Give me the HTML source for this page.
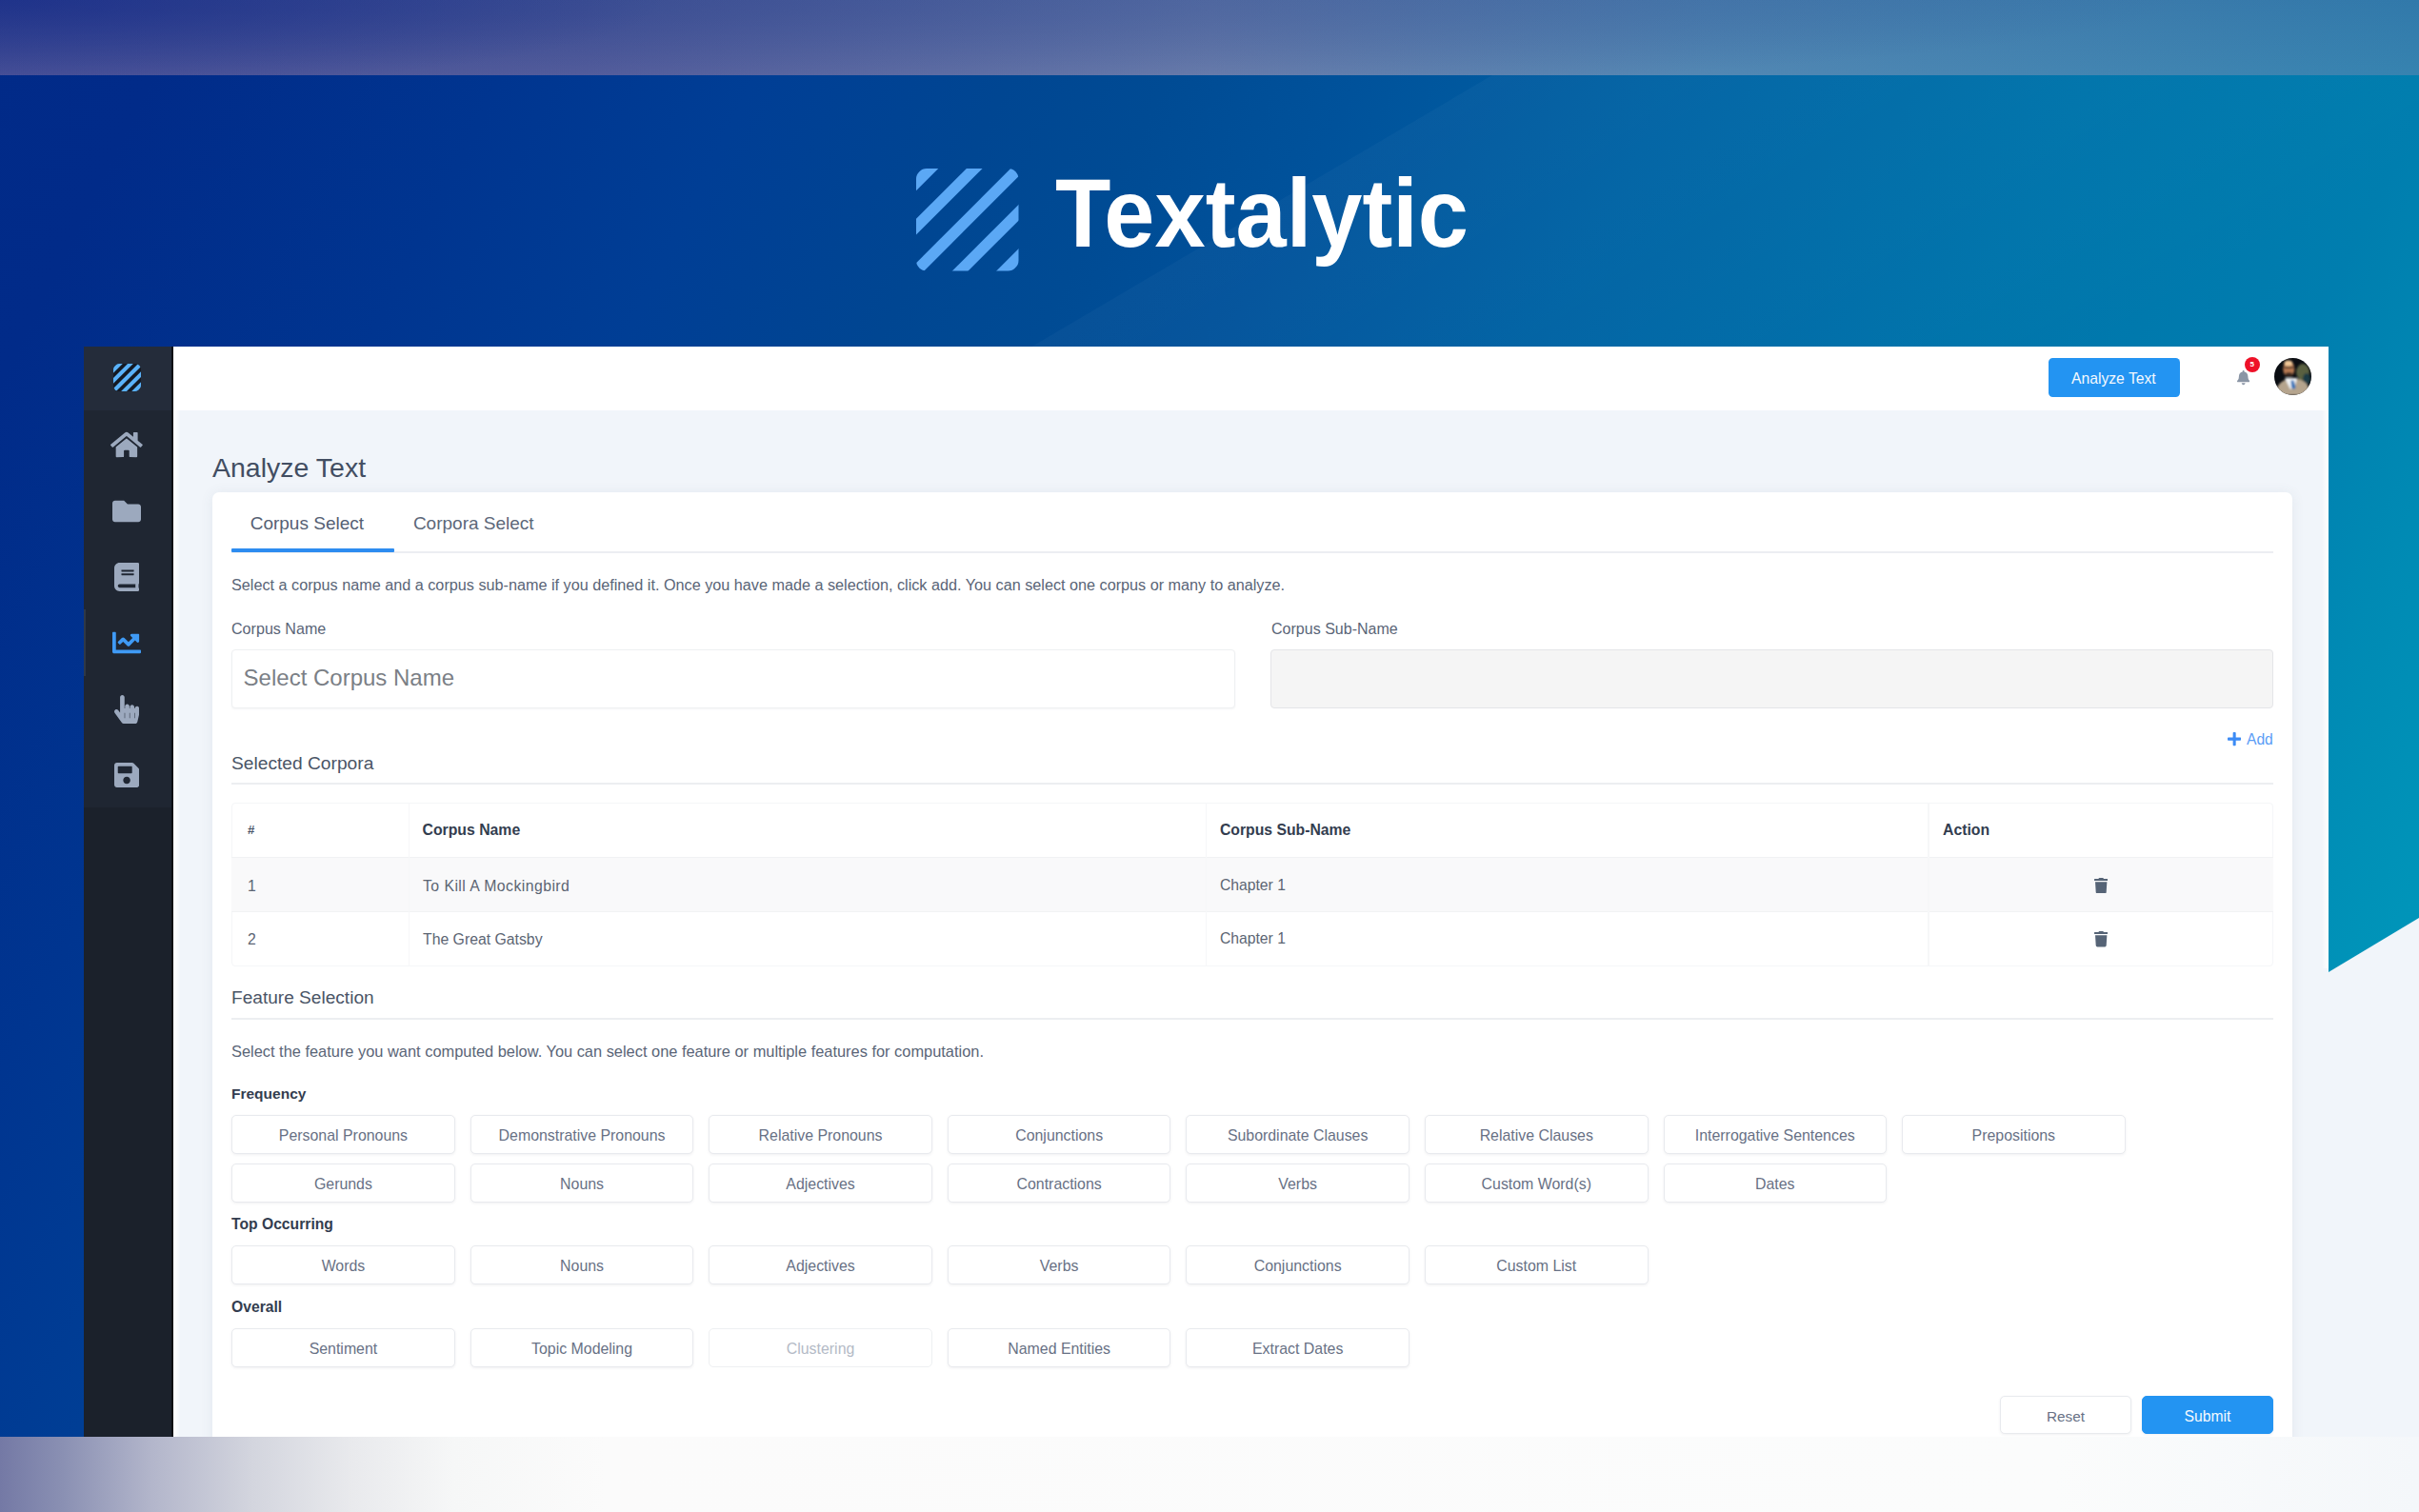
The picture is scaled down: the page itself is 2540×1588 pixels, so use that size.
<!DOCTYPE html>
<html>
<head>
<meta charset="utf-8">
<title>Textalytic</title>
<style>
*{box-sizing:border-box;margin:0;padding:0}
html,body{width:2540px;height:1588px;overflow:hidden;background:#fff}
body{font-family:"Liberation Sans",sans-serif;position:relative;color:#4a5568}
.abs{position:absolute}
#bg{left:0;top:0;width:2540px;height:1588px;background:linear-gradient(116.6deg,#012a88 0%,#012b89 6%,#003590 17%,#003e95 25%,#004692 33%,#004b94 38%,#00529b 44%,#0063a4 54%,#0074ab 67%,#007eaf 78%,#008ab4 84%,#0094b9 90%,#009cbd 100%)}
#tri{left:0;top:0;width:2540px;height:1588px}
#topband{left:0;top:0;width:2540px;height:79px;background:radial-gradient(ellipse 700px 95px at 0 0,rgba(20,40,135,.6),rgba(20,40,135,0)),radial-gradient(ellipse 2300px 120px at 0 0,rgba(20,50,132,.5),rgba(20,50,132,0)),linear-gradient(180deg,rgba(20,60,135,.14) 0%,rgba(20,60,135,0) 100%),linear-gradient(90deg,#56599c 0%,#5d639f 24%,#6d80ad 50%,#5287b3 71%,#3683b0 100%)}
#botband{left:0;top:1508.5px;width:2540px;height:80px;background:linear-gradient(90deg,#7479a5 0%,#8a90b3 2.6%,#b3b6cb 6.3%,#d3d5de 10.4%,#e9eaed 14.6%,#f6f7f7 18.7%,#fbfbfb 25%,#fbfcfc 85%,#f4f7fa 100%)}
#app{left:88px;top:364px;width:2357px;height:1145px;background:#f1f5fa;overflow:hidden}
#in{left:-88px;top:-364px;width:2540px;height:1588px}
.t{position:absolute;white-space:nowrap}
.hr{position:absolute;height:2px;background:#eceef1}
.lbl{color:#5a6577}
.h3{color:#4a5466}
.p{color:#5a6577}
.b{font-weight:700;color:#333d4f}
.td{color:#5c6573}
.fb{position:absolute;width:234.5px;height:41px;border:1px solid #e8eaee;border-radius:5px;background:#fff;box-shadow:0 1px 3px rgba(50,60,80,.075);font-size:15.9px;line-height:42px;text-align:center;color:#687185;white-space:nowrap}
.fb.dis{color:#b4bac6;border-color:#eef0f2;box-shadow:none}
</style>
</head>
<body>
<div id="bg" class="abs"></div>
<svg id="tri" class="abs" viewBox="0 0 2540 1588"><defs><linearGradient id="stk" gradientUnits="userSpaceOnUse" x1="1325" y1="221" x2="1630" y2="738"><stop offset="0" stop-color="#fff" stop-opacity=".028"/><stop offset="1" stop-color="#fff" stop-opacity="0"/></linearGradient></defs><polygon points="1701,0 2540,0 2540,364 1083.6,364" fill="url(#stk)"/><polygon points="2540,964 2540,1588 1500,1588" fill="#f1f5fa"/></svg>
<div id="topband" class="abs"></div>
<div id="botband" class="abs"></div>

<svg class="abs" style="left:962px;top:177px" width="107.5" height="107.5" viewBox="0 0 107.5 107.5"><defs><clipPath id="rc962"><rect x="0" y="0" width="107.5" height="107.5" rx="11" ry="11"/></clipPath></defs><g clip-path="url(#rc962)" stroke="#5ba8f5" stroke-width="11.8" fill="none"><line x1="44.9" y1="-30" x2="-30" y2="44.9"/><line x1="91.2" y1="-30" x2="-30" y2="91.2"/><line x1="137.5" y1="-30" x2="-30" y2="137.5"/><line x1="183.8" y1="-30" x2="-30" y2="183.8"/><line x1="230.1" y1="-30" x2="-30" y2="230.1"/></g></svg>
<div class="t " style="left:1108px;top:166.41px;font-size:102.7px;line-height:116px;font-weight:700;color:#fff;transform-origin:0 50%;transform:scaleX(.931)">Textalytic</div>
<div id="app" class="abs"><div id="in" class="abs">
<div class="abs" style="left:88px;top:364px;width:94px;height:1145px;background:#1b212b"></div>
<div class="abs" style="left:88px;top:431px;width:94px;height:417px;background:#1f2632"></div>
<div class="abs" style="left:88px;top:364px;width:94px;height:67px;background:#242c3a"></div>
<div class="abs" style="left:180px;top:364px;width:2px;height:1145px;background:#0b0e14"></div>
<div class="abs" style="left:88px;top:640px;width:2px;height:70px;background:#2f3846"></div>
<svg class="abs" style="left:119.3px;top:382.4px" width="29" height="29" viewBox="0 0 107.5 107.5"><defs><clipPath id="rc119"><rect x="0" y="0" width="107.5" height="107.5" rx="22" ry="22"/></clipPath></defs><g clip-path="url(#rc119)" stroke="#5ab2fa" stroke-width="15.2" fill="none"><rect x="-2" y="-2" width="111.5" height="111.5" fill="#141923" stroke="none"/><line x1="55.7" y1="-30" x2="-30" y2="55.7"/><line x1="96.6" y1="-30" x2="-30" y2="96.6"/><line x1="137.5" y1="-30" x2="-30" y2="137.5"/><line x1="178.4" y1="-30" x2="-30" y2="178.4"/><line x1="219.3" y1="-30" x2="-30" y2="219.3"/></g></svg>
<svg class="abs" style="left:116.1px;top:452.0px" width="33.8" height="30.0" viewBox="0 0 576 512"><path fill="#9ca9be" d="M280.37 148.26L96 300.11V464a16 16 0 0 0 16 16l112.06-.29a16 16 0 0 0 15.92-16V368a16 16 0 0 1 16-16h64a16 16 0 0 1 16 16v95.64a16 16 0 0 0 16 16.05L464 480a16 16 0 0 0 16-16V300L295.67 148.26a12.19 12.19 0 0 0-15.3 0zM571.6 251.47L488 182.56V44.05a12 12 0 0 0-12-12h-56a12 12 0 0 0-12 12v72.61L318.47 43a48 48 0 0 0-61 0L4.34 251.47a12 12 0 0 0-1.6 16.9l25.5 31A12 12 0 0 0 45.15 301l235.22-193.74a12.19 12.19 0 0 1 15.3 0L530.9 301a12 12 0 0 0 16.9-1.6l25.5-31a12 12 0 0 0-1.7-16.93z"/></svg>
<svg class="abs" style="left:118.0px;top:522.0px" width="30.0" height="30.0" viewBox="0 0 512 512"><path fill="#9ca9be" d="M464 128H272l-64-64H48C21.49 64 0 85.49 0 112v288c0 26.51 21.49 48 48 48h416c26.51 0 48-21.49 48-48V176c0-26.51-21.49-48-48-48z"/></svg>
<svg class="abs" style="left:119.9px;top:591.0px" width="26.2" height="30.0" viewBox="0 0 448 512"><path fill="#9ca9be" d="M448 360V24c0-13.3-10.7-24-24-24H96C43 0 0 43 0 96v320c0 53 43 96 96 96h328c13.3 0 24-10.7 24-24v-16c0-7.5-3.5-14.3-8.9-18.7-4.2-15.4-4.2-59.3 0-74.7 5.4-4.3 8.9-11.1 8.9-18.6zM128 134c0-3.3 2.7-6 6-6h212c3.3 0 6 2.7 6 6v20c0 3.3-2.7 6-6 6H134c-3.3 0-6-2.7-6-6v-20zm0 64c0-3.3 2.7-6 6-6h212c3.3 0 6 2.7 6 6v20c0 3.3-2.7 6-6 6H134c-3.3 0-6-2.7-6-6v-20zm253.4 250H96c-17.7 0-32-14.3-32-32 0-17.6 14.4-32 32-32h285.4c-1.9 17.1-1.9 46.9 0 64z"/></svg>
<svg class="abs" style="left:118.0px;top:660.0px" width="30.0" height="30.0" viewBox="0 0 512 512"><path fill="#3f9af5" d="M496 384H64V80c0-8.84-7.16-16-16-16H16C7.16 64 0 71.16 0 80v336c0 17.67 14.33 32 32 32h464c8.84 0 16-7.16 16-16v-32c0-8.84-7.16-16-16-16zM464 96H345.94c-21.38 0-32.09 25.85-16.97 40.97l32.4 32.4L288 242.75l-73.37-73.37c-12.5-12.5-32.76-12.5-45.25 0l-68.69 68.69c-6.25 6.25-6.25 16.38 0 22.63l22.62 22.62c6.25 6.25 16.38 6.25 22.63 0L192 237.25l73.37 73.37c12.5 12.5 32.76 12.5 45.25 0l96-96 32.4 32.4c15.12 15.12 40.97 4.41 40.97-16.97V112c.01-8.84-7.15-16-15.99-16z"/></svg>
<svg class="abs" style="left:119.9px;top:730.0px" width="26.2" height="30.0" viewBox="0 0 448 512"><path fill="#9ca9be" d="M448 240v96c0 3.084-.356 6.159-1.063 9.162l-32 136C410.686 499.23 394.562 512 376 512H168a40.004 40.004 0 0 1-32.35-16.473l-127.997-176c-12.993-17.866-9.043-42.883 8.822-55.876 17.867-12.994 42.884-9.043 55.877 8.823L104 315.992V40c0-22.091 17.908-40 40-40s40 17.909 40 40v200h8v-40c0-22.091 17.908-40 40-40s40 17.909 40 40v40h8v-24c0-22.091 17.908-40 40-40s40 17.909 40 40v24h8c0-22.091 17.908-40 40-40s40 17.909 40 40zm-256 80h-8v96h8v-96zm88 0h-8v96h8v-96zm88 0h-8v96h8v-96z"/></svg>
<svg class="abs" style="left:119.9px;top:799.0px" width="26.2" height="30.0" viewBox="0 0 448 512"><path fill="#9ca9be" d="M433.941 129.941l-83.882-83.882A48 48 0 0 0 316.118 32H48C21.49 32 0 53.49 0 80v352c0 26.51 21.49 48 48 48h352c26.51 0 48-21.49 48-48V163.882a48 48 0 0 0-14.059-33.941zM224 416c-35.346 0-64-28.654-64-64 0-35.346 28.654-64 64-64s64 28.654 64 64c0 35.346-28.654 64-64 64zm96-304.52V212c0 6.627-5.373 12-12 12H76c-6.627 0-12-5.373-12-12V108c0-6.627 5.373-12 12-12h228.52c3.183 0 6.235 1.264 8.485 3.515l3.48 3.48A11.996 11.996 0 0 1 320 111.48z"/></svg>
<div class="abs" style="left:182px;top:364px;width:2263px;height:67px;background:#fff"></div>
<div class="abs" style="left:2151px;top:376px;width:137.7px;height:41px;border-radius:4.5px;background:#2394f2"></div>
<div class="t " style="left:2175px;top:387.56px;font-size:15.7px;line-height:20px;color:#f4f9fe">Analyze Text</div>
<svg class="abs" style="left:2348.8px;top:389.4px" width="13.3" height="15.2" viewBox="0 0 448 512"><path fill="#8a95a5" d="M224 512c35.32 0 63.97-28.65 63.97-64H160.03c0 35.35 28.65 64 63.97 64zm215.39-149.71c-19.32-20.76-55.47-51.99-55.47-154.29 0-77.7-54.48-139.9-127.94-155.16V32c0-17.67-14.32-32-31.98-32s-31.98 14.33-31.98 32v20.84C118.56 68.1 64.08 130.3 64.08 208c0 102.3-36.15 133.53-55.47 154.29-6 6.45-8.66 14.16-8.61 21.71.11 16.4 12.98 32 32.1 32h383.8c19.12 0 32-15.6 32.1-32 .05-7.55-2.61-15.27-8.61-21.71z"/></svg>
<div class="abs" style="left:2356.8px;top:375.4px;width:16px;height:16px;border-radius:8px;background:#ee1128;color:#fff;font-size:8px;line-height:16px;text-align:center;font-weight:700">5</div>
<svg class="abs" style="left:2387.5px;top:376.4px" width="39" height="39" viewBox="0 0 39 39"><defs><clipPath id="av"><circle cx="19.5" cy="19.5" r="19.5"/></clipPath><filter id="avb" x="-10%" y="-10%" width="120%" height="120%"><feGaussianBlur stdDeviation="0.9"/></filter></defs><g clip-path="url(#av)"><rect width="39" height="39" fill="#0a0d12"/><g filter="url(#avb)"><ellipse cx="30" cy="15" rx="7" ry="9" fill="#5a6140"/><ellipse cx="34" cy="22" rx="4" ry="6" fill="#1d3a44"/><path d="M1 39 C2 27 9 23 15 22 L24 22 C31 23 37 27 38 39 Z" fill="#b5a48d"/><path d="M11 21 L24 21 L22 29 L17 33 Z" fill="#f2f4f6"/><path d="M17.5 23.5 L20.5 23.5 L22.5 31 L20.5 33 L18 31 Z" fill="#2f72b8"/><ellipse cx="15.3" cy="11.5" rx="6" ry="8.4" fill="#b87a52"/><ellipse cx="14.8" cy="5.6" rx="4.4" ry="3" fill="#f0c796"/><ellipse cx="15.5" cy="17.5" rx="4.4" ry="2.6" fill="#3a2a22"/><rect x="10.5" y="9.2" width="10" height="1.8" fill="#4a3626"/></g></g></svg>
<div class="abs" style="left:182px;top:431px;width:7px;height:1078px;background:linear-gradient(90deg,#fff 0%,#fbfcfd 45%,rgba(241,245,249,0) 100%)"></div>
<div class="abs" style="left:2438px;top:431px;width:7px;height:586px;background:linear-gradient(270deg,#fdfefe 0%,#f9fbfc 40%,rgba(241,245,249,0) 100%)"></div>
<div class="t " style="left:223px;top:473.02px;font-size:28.5px;line-height:37px;color:#424e62">Analyze Text</div>
<div class="abs" style="left:223px;top:517px;width:2184px;height:1010px;background:#fff;border-radius:7px;box-shadow:0 1px 14px rgba(70,90,120,.085)"></div>
<div class="t " style="left:262.7px;top:537.32px;font-size:19px;line-height:25px;color:#556073">Corpus Select</div>
<div class="t " style="left:433.9px;top:537.32px;font-size:19px;line-height:25px;color:#5c6779">Corpora Select</div>
<div class="hr" style="left:243px;top:578.5px;width:2144px;height:2px;background:#eceef2"></div>
<div class="abs" style="left:243px;top:576.2px;width:171px;height:3.8px;background:#2d8cf0;border-radius:1px"></div>
<div class="t p" style="left:243px;top:603.88px;font-size:16.22px;line-height:21px;">Select a corpus name and a corpus sub-name if you defined it. Once you have made a selection, click add. You can select one corpus or many to analyze.</div>
<div class="t lbl" style="left:243px;top:649.52px;font-size:16.1px;line-height:21px;">Corpus Name</div>
<div class="t lbl" style="left:1335px;top:649.54px;font-size:16.05px;line-height:21px;">Corpus Sub-Name</div>
<div class="abs" style="left:243px;top:682.3px;width:1054px;height:61.5px;border:1px solid #eef0f2;border-radius:4px;background:#fff;box-shadow:0 1px 2px rgba(50,60,80,.05)"></div>
<div class="t " style="left:255.6px;top:696.08px;font-size:24px;line-height:31px;color:#7b7f86">Select Corpus Name</div>
<div class="abs" style="left:1333.5px;top:681.7px;width:1053.5px;height:62.5px;border:1px solid #e4e5e8;border-radius:4px;background:#f5f5f5"></div>
<svg class="abs" style="left:2338.5px;top:768.4px" width="14.3" height="16.3" viewBox="0 0 448 512"><path fill="#3c8bf5" d="M416 208H272V64c0-17.67-14.33-32-32-32h-32c-17.67 0-32 14.33-32 32v144H32c-17.67 0-32 14.33-32 32v32c0 17.67 14.33 32 32 32h144v144c0 17.67 14.33 32 32 32h32c17.67 0 32-14.33 32-32V304h144c17.67 0 32-14.33 32-32v-32c0-17.67-14.33-32-32-32z"/></svg>
<div class="t " style="left:2359px;top:766.79px;font-size:15.6px;line-height:20px;color:#5a9df6">Add</div>
<div class="t h3" style="left:243px;top:789.15px;font-size:19.2px;line-height:25px;">Selected Corpora</div>
<div class="hr" style="left:243px;top:822px;width:2144px"></div>
<div class="abs" style="left:243px;top:843px;width:2144px;height:172px;border:1px solid #f5f6f8;border-radius:4px;background:#fff"></div>
<div class="abs" style="left:243px;top:900px;width:2144px;height:58px;background:#f9f9fa;border-top:1px solid #f1f2f4;border-bottom:1px solid #f1f2f4"></div>
<div class="abs" style="left:428.5px;top:843px;width:1.5px;height:172px;background:#f6f7f8"></div>
<div class="abs" style="left:1265.5px;top:843px;width:1.5px;height:172px;background:#f6f7f8"></div>
<div class="abs" style="left:2024px;top:843px;width:1.5px;height:172px;background:#f6f7f8"></div>
<div class="t b" style="left:260px;top:862.93px;font-size:13.2px;line-height:17px;color:#4a5568">#</div>
<div class="t b" style="left:443.5px;top:861.03px;font-size:15.8px;line-height:21px;">Corpus Name</div>
<div class="t b" style="left:1281px;top:861.55px;font-size:15.74px;line-height:20px;">Corpus Sub-Name</div>
<div class="t b" style="left:2040px;top:861.03px;font-size:15.8px;line-height:21px;">Action</div>
<div class="t td" style="left:260px;top:919.63px;font-size:15.8px;line-height:21px;">1</div>
<div class="t td" style="left:444px;top:919.63px;font-size:15.8px;line-height:21px;letter-spacing:.45px">To Kill A Mockingbird</div>
<div class="t td" style="left:1281px;top:920.16px;font-size:15.7px;line-height:20px;">Chapter 1</div>
<svg class="abs" style="left:2198.8px;top:921.9px" width="14.4" height="16.5" viewBox="0 0 448 512"><path fill="#566476" d="M432 32H312l-9.4-18.7A24 24 0 0 0 281.1 0H166.8a23.72 23.72 0 0 0-21.4 13.3L136 32H16A16 16 0 0 0 0 48v32a16 16 0 0 0 16 16h416a16 16 0 0 0 16-16V48a16 16 0 0 0-16-16zM53.2 467a48 48 0 0 0 47.9 45h245.8a48 48 0 0 0 47.9-45L416 128H32z"/></svg>
<div class="t td" style="left:260px;top:975.73px;font-size:15.8px;line-height:21px;">2</div>
<div class="t td" style="left:444px;top:975.73px;font-size:15.8px;line-height:21px;">The Great Gatsby</div>
<div class="t td" style="left:1281px;top:976.26px;font-size:15.7px;line-height:20px;">Chapter 1</div>
<svg class="abs" style="left:2198.8px;top:978.0px" width="14.4" height="16.5" viewBox="0 0 448 512"><path fill="#566476" d="M432 32H312l-9.4-18.7A24 24 0 0 0 281.1 0H166.8a23.72 23.72 0 0 0-21.4 13.3L136 32H16A16 16 0 0 0 0 48v32a16 16 0 0 0 16 16h416a16 16 0 0 0 16-16V48a16 16 0 0 0-16-16zM53.2 467a48 48 0 0 0 47.9 45h245.8a48 48 0 0 0 47.9-45L416 128H32z"/></svg>
<div class="t h3" style="left:243px;top:1035.28px;font-size:19.1px;line-height:25px;">Feature Selection</div>
<div class="hr" style="left:243px;top:1068.5px;width:2144px"></div>
<div class="t p" style="left:243px;top:1093.82px;font-size:16.4px;line-height:21px;">Select the feature you want computed below. You can select one feature or multiple features for computation.</div>
<div class="t b" style="left:243px;top:1138.63px;font-size:15.5px;line-height:20px;">Frequency</div>
<div class="t b" style="left:243px;top:1276.26px;font-size:15.7px;line-height:20px;">Top Occurring</div>
<div class="t b" style="left:243px;top:1363.06px;font-size:15.7px;line-height:20px;">Overall</div>
<div class="fb" style="left:243.2px;top:1170.6px">Personal Pronouns</div>
<div class="fb" style="left:493.8px;top:1170.6px">Demonstrative Pronouns</div>
<div class="fb" style="left:744.3px;top:1170.6px">Relative Pronouns</div>
<div class="fb" style="left:994.9px;top:1170.6px">Conjunctions</div>
<div class="fb" style="left:1245.4px;top:1170.6px">Subordinate Clauses</div>
<div class="fb" style="left:1496.0px;top:1170.6px">Relative Clauses</div>
<div class="fb" style="left:1746.5px;top:1170.6px">Interrogative Sentences</div>
<div class="fb" style="left:1997.1px;top:1170.6px">Prepositions</div>
<div class="fb" style="left:243.2px;top:1222px">Gerunds</div>
<div class="fb" style="left:493.8px;top:1222px">Nouns</div>
<div class="fb" style="left:744.3px;top:1222px">Adjectives</div>
<div class="fb" style="left:994.9px;top:1222px">Contractions</div>
<div class="fb" style="left:1245.4px;top:1222px">Verbs</div>
<div class="fb" style="left:1496.0px;top:1222px">Custom Word(s)</div>
<div class="fb" style="left:1746.5px;top:1222px">Dates</div>
<div class="fb" style="left:243.2px;top:1308.4px">Words</div>
<div class="fb" style="left:493.8px;top:1308.4px">Nouns</div>
<div class="fb" style="left:744.3px;top:1308.4px">Adjectives</div>
<div class="fb" style="left:994.9px;top:1308.4px">Verbs</div>
<div class="fb" style="left:1245.4px;top:1308.4px">Conjunctions</div>
<div class="fb" style="left:1496.0px;top:1308.4px">Custom List</div>
<div class="fb" style="left:243.2px;top:1395px">Sentiment</div>
<div class="fb" style="left:493.8px;top:1395px">Topic Modeling</div>
<div class="fb dis" style="left:744.3px;top:1395px">Clustering</div>
<div class="fb" style="left:994.9px;top:1395px">Named Entities</div>
<div class="fb" style="left:1245.4px;top:1395px">Extract Dates</div>
<div class="fb" style="left:2100px;top:1466px;width:138px;height:40px;line-height:41px;font-size:15.3px">Reset</div>
<div class="fb" style="left:2249px;top:1466px;width:138px;height:40px;line-height:41px;font-size:15.7px;background:#2394f2;border-color:#2394f2;color:#f4f9fe">Submit</div>
</div></div>
</body>
</html>
